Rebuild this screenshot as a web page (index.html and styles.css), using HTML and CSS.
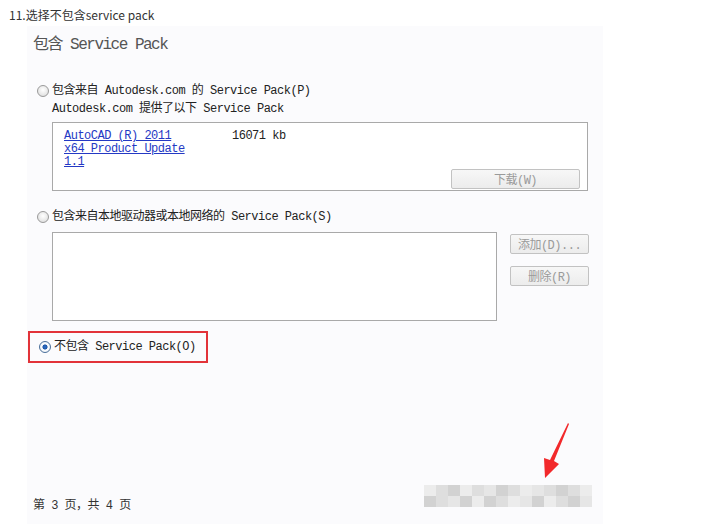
FILE: index.html
```html
<!DOCTYPE html>
<html lang="zh-CN">

<head>
    <meta charset="UTF-8">
    <title>包含 Service Pack</title>
    <link rel="stylesheet" href="styles.css">
</head>

<body>
    <div class="caption">11.选择不包含service pack</div>

    <div class="panel">
        <div class="title">包含 Service Pack</div>

        <div class="option option-first">
            <span class="radio"></span>
            <span>包含来自 Autodesk.com 的 Service Pack(P)</span>
        </div>
        <div class="sub">Autodesk.com 提供了以下 Service Pack</div>

        <div class="list-box online">
            <div class="pack-row">
                <a class="pack-link" href="#">AutoCAD (R) 2011 <br>x64 Product Update <br>1.1</a>
                <span class="pack-size">16071 kb</span>
            </div>
            <div class="box-actions">
                <button class="win-button wide" disabled>下载(W)</button>
            </div>
        </div>

        <div class="option option-second">
            <span class="radio"></span>
            <span>包含来自本地驱动器或本地网络的 Service Pack(S)</span>
        </div>

        <div class="local-row">
            <div class="list-box local"></div>
            <div class="side-buttons">
                <button class="win-button" disabled>添加(D)...</button>
                <button class="win-button" disabled>删除(R)</button>
            </div>
        </div>

        <div class="highlight">
            <div class="option">
                <span class="radio checked"></span>
                <span>不包含 Service Pack(O)</span>
            </div>
        </div>

        <div class="footer">
            <span class="page-no">第 3 页，共 4 页</span>
            <div class="blurred">
                <span class="px a"></span><span class="px b"></span><span class="px c"></span><span class="px a"></span>
                <span class="px b"></span><span class="px d"></span><span class="px c"></span><span class="px b"></span>
                <span class="px a"></span><span class="px d"></span><span class="px b"></span><span class="px c"></span>
                <span class="px b"></span><span class="px a"></span>
                <span class="px c"></span><span class="px b"></span><span class="px d"></span><span class="px c"></span>
                <span class="px a"></span><span class="px c"></span><span class="px b"></span><span class="px a"></span>
                <span class="px d"></span><span class="px c"></span><span class="px a"></span><span class="px b"></span>
                <span class="px c"></span><span class="px d"></span>
            </div>
        </div>
    </div>

    <!-- red arrow pointing at the next button -->
    <svg class="arrow" width="40" height="60" viewBox="0 0 40 60">
        <polygon points="33,2 34,3 19,40 24,43 10,57 9,37 15,39" fill="#f2292b"/>
    </svg>
</body>

</html>
```

FILE: styles.css
```css
body {
    margin: 0;
    padding: 0;
    background-color: #ffffff;
    font-family: "Noto Sans CJK SC", sans-serif;
    position: relative;
    width: 709px;
    height: 524px;
    overflow: hidden;
}

.caption {
    height: 26px;
    padding: 7px 0 0 9px;
    box-sizing: border-box;
    font-size: 12px;
    line-height: 16px;
    color: #333333;
}

/* the installer page, SimSun-like text: mono latin + CJK */
.panel {
    margin-left: 27px;
    width: 576px;
    height: 498px;
    background-color: #fbfbfd;
    font-family: "Liberation Mono", "Noto Sans CJK SC", monospace;
    font-size: 12px;
    letter-spacing: -0.5px;
    color: #222222;
    display: flex;
    flex-direction: column;
}

.title {
    margin: 9px 0 0 6px;
    font-size: 16px;
    line-height: 20px;
    letter-spacing: -1.5px;
    color: #555555;
}

.option {
    display: flex;
    align-items: center;
    gap: 3px;
    height: 14px;
    line-height: 14px;
}

.option-first {
    margin: 29px 0 0 10px;
}

.option-second {
    margin: 19px 0 0 10px;
}

.radio {
    width: 10px;
    height: 10px;
    border-radius: 50%;
    border: 1px solid #9a9a9a;
    background: radial-gradient(circle at 50% 40%, #ffffff 0%, #e4e4e4 70%, #cfcfcf 100%);
    flex: none;
}

.radio.checked {
    border-color: #4a6f9a;
    background: radial-gradient(circle, #2f6fc8 0%, #1f58a8 30%, #ffffff 42%, #e8eef5 80%, #c6d2e0 100%);
}

.sub {
    margin: 4px 0 0 25px;
    line-height: 14px;
}

.list-box {
    border: 1px solid #a9a9a9;
    background-color: #ffffff;
    box-sizing: border-box;
}

.online {
    margin: 6px 0 0 25px;
    width: 536px;
    height: 69px;
    padding: 7px 7px 3px 11px;
    display: flex;
    flex-direction: column;
    justify-content: space-between;
}

.pack-row {
    display: flex;
    line-height: 13px;
}

.pack-link {
    width: 168px;
    color: #2439c4;
    text-decoration: underline;
}

.box-actions {
    display: flex;
    justify-content: flex-end;
}

.win-button {
    height: 20px;
    border: 1px solid #c2c2c2;
    border-radius: 2px;
    background: linear-gradient(#f7f7f7, #ececec);
    font-family: "Liberation Mono", "Noto Sans CJK SC", monospace;
    font-size: 12px;
    letter-spacing: -0.5px;
    color: #9a9a9a;
    padding: 0;
    width: 79px;
}

.win-button.wide {
    width: 129px;
}

.local-row {
    display: flex;
    gap: 13px;
    margin: 8px 0 0 25px;
}

.local {
    width: 445px;
    height: 89px;
}

.side-buttons {
    display: flex;
    flex-direction: column;
    gap: 12px;
    padding-top: 2px;
}

.highlight {
    margin: 10px 0 0 1px;
    width: 180px;
    height: 32px;
    border: 2px solid #e23339;
    box-sizing: border-box;
    display: flex;
    align-items: center;
    padding-left: 9px;
}

.footer {
    margin-top: auto;
    height: 40px;
    display: flex;
    align-items: center;
    justify-content: space-between;
    padding: 0 11px 0 6px;
    box-sizing: border-box;
}

.page-no {
    color: #333333;
}

/* pixelated (mosaic) next / finish buttons */
.blurred {
    display: grid;
    grid-template-columns: repeat(14, 12px);
    grid-auto-rows: 11px;
    margin-top: -16px;
}

.px.a {
    background-color: #ececec;
}

.px.b {
    background-color: #dedede;
}

.px.c {
    background-color: #d2d2d2;
}

.px.d {
    background-color: #e6e6e6;
}

.arrow {
    position: absolute;
    left: 535px;
    top: 421px;
}
```
